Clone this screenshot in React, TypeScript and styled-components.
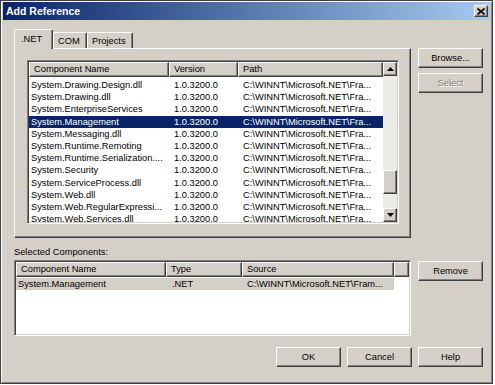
import React from "react";
import styled, { createGlobalStyle } from "styled-components";

const face = "#d4d0c8";
const shadow = "#808080";
const darkShadow = "#404040";
const highlight = "#ffffff";

const GlobalStyle = createGlobalStyle`
  html, body {
    margin: 0;
    padding: 0;
    background: #fff;
  }
  body {
    font-family: "Liberation Sans", Arial, sans-serif;
    font-size: 9.3px;
    color: #000;
  }
  * {
    box-sizing: border-box;
  }
`;

const raised = `
  border-top: 1px solid ${highlight};
  border-left: 1px solid ${highlight};
  border-right: 1px solid ${darkShadow};
  border-bottom: 1px solid ${darkShadow};
  box-shadow: inset -1px -1px 0 ${shadow};
`;

const sunken = `
  border-top: 1px solid ${shadow};
  border-left: 1px solid ${shadow};
  border-right: 1px solid ${highlight};
  border-bottom: 1px solid ${highlight};
  box-shadow: inset 1px 1px 0 ${darkShadow}, inset -1px -1px 0 ${face};
`;

const Window = styled.div`
  display: flex;
  flex-direction: column;
  width: 493px;
  height: 384px;
  padding: 1px 2px;
  border: 1px solid ${darkShadow};
  background: ${face};
  box-shadow: inset 1px 1px 0 ${highlight}, inset -1px -1px 0 ${shadow};
`;

const TitleBar = styled.div`
  display: flex;
  justify-content: space-between;
  align-items: center;
  height: 18px;
  padding: 0 2px 0 3px;
  background: linear-gradient(to right, #0a246a, #a6caf0);
`;

const TitleText = styled.span`
  color: #fff;
  font-size: 10.5px;
  font-weight: bold;
`;

const CloseButton = styled.div`
  display: flex;
  justify-content: center;
  align-items: center;
  width: 14px;
  height: 12px;
  background: ${face};
  ${raised}
`;

const Body = styled.div`
  display: flex;
  flex-direction: column;
  padding: 9px 7px 0 11px;
`;

const Row = styled.div<{ $top?: number }>`
  display: flex;
  align-items: flex-start;
  gap: 7px;
  margin-top: ${(p) => p.$top ?? 0}px;
`;

const TabArea = styled.div`
  display: flex;
  flex-direction: column;
  width: 397px;
`;

const TabStrip = styled.div`
  display: flex;
  align-items: flex-end;
  height: 19px;
`;

const Tab = styled.div<{ $active?: boolean; $width: number }>`
  position: relative;
  z-index: ${(p) => (p.$active ? 1 : 0)};
  width: ${(p) => p.$width}px;
  height: ${(p) => (p.$active ? 20 : 16)}px;
  margin-bottom: ${(p) => (p.$active ? -1 : 0)}px;
  padding: ${(p) => (p.$active ? "3px 0 0 6px" : "2px 0 0 4px")};
  border-top: 1px solid ${highlight};
  border-left: 1px solid ${highlight};
  border-right: 1px solid ${darkShadow};
  border-radius: 2px 2px 0 0;
  background: ${face};
  box-shadow: inset -1px 0 0 ${shadow};
  line-height: 12px;
  white-space: nowrap;
`;

const Panel = styled.div`
  width: 397px;
  height: 190px;
  padding: 11px 0 0 12px;
  border-top: 1px solid ${highlight};
  border-left: 1px solid ${highlight};
  border-right: 1px solid ${darkShadow};
  border-bottom: 1px solid ${darkShadow};
  box-shadow: inset -1px -1px 0 ${shadow};
`;

const ListView = styled.div<{ $width: number; $height: number }>`
  display: flex;
  width: ${(p) => p.$width}px;
  height: ${(p) => p.$height}px;
  padding: 1px;
  background: #fff;
  overflow: hidden;
  ${sunken}
`;

const ListMain = styled.div`
  display: flex;
  flex: 1;
  flex-direction: column;
  overflow: hidden;
`;

const Header = styled.div`
  display: flex;
  flex: none;
  height: 15px;
`;

const HeaderCell = styled.div<{ $width: number }>`
  flex: none;
  width: ${(p) => p.$width}px;
  height: 15px;
  padding-left: 4px;
  background: ${face};
  line-height: 13px;
  white-space: nowrap;
  overflow: hidden;
  ${raised}
`;

const Rows = styled.div<{ $top: number }>`
  display: flex;
  flex-direction: column;
  padding-top: ${(p) => p.$top}px;
`;

const ItemRow = styled.div<{ $selected?: boolean; $tone?: "focus" | "idle" }>`
  display: flex;
  flex: none;
  height: 12.2px;
  line-height: 12.2px;
  color: ${(p) => (p.$selected && p.$tone === "focus" ? "#fff" : "#000")};
  background: ${(p) =>
    p.$selected ? (p.$tone === "focus" ? "#0a246a" : face) : "transparent"};
`;

const Cell = styled.div<{ $width: number; $pad: number }>`
  flex: none;
  width: ${(p) => p.$width}px;
  padding-left: ${(p) => p.$pad}px;
  white-space: nowrap;
  overflow: hidden;
`;

const ScrollBar = styled.div`
  display: flex;
  flex: none;
  flex-direction: column;
  width: 14px;
`;

const ScrollButton = styled.div`
  display: flex;
  flex: none;
  justify-content: center;
  align-items: center;
  height: 14px;
  background: ${face};
  ${raised}
`;

const Track = styled.div`
  flex: 1;
  background: #ecebe6;
`;

const Thumb = styled.div<{ $offset: number }>`
  height: 24px;
  margin-top: ${(p) => p.$offset}px;
  background: ${face};
  ${raised}
`;

const ButtonColumn = styled.div<{ $top: number }>`
  display: flex;
  flex-direction: column;
  gap: 5px;
  margin-top: ${(p) => p.$top}px;
`;

const Button = styled.button`
  width: 65px;
  height: 20px;
  padding: 0;
  background: ${face};
  font: inherit;
  color: #000;
  ${raised}

  &:disabled {
    color: ${shadow};
    text-shadow: 1px 1px 0 ${highlight};
  }
`;

const Label = styled.div`
  margin-top: 8px;
  height: 13px;
  line-height: 13px;
`;

const Footer = styled.div`
  display: flex;
  justify-content: flex-end;
  gap: 6px;
  margin-top: 11px;
`;

const Arrow = ({ up }: { up?: boolean }) => (
  <svg width="7" height="4" viewBox="0 0 7 4">
    <path d={up ? "M3.5 0 L7 4 L0 4 Z" : "M0 0 L7 0 L3.5 4 Z"} fill="#000" />
  </svg>
);

const names = [
  "System.Drawing.Design.dll",
  "System.Drawing.dll",
  "System.EnterpriseServices",
  "System.Management",
  "System.Messaging.dll",
  "System.Runtime.Remoting",
  "System.Runtime.Serialization....",
  "System.Security",
  "System.ServiceProcess.dll",
  "System.Web.dll",
  "System.Web.RegularExpressi...",
  "System.Web.Services.dll",
];

const path = "C:\\WINNT\\Microsoft.NET\\Fra...";

export default function App() {
  return (
    <>
      <GlobalStyle />
      <Window>
        <TitleBar>
          <TitleText>Add Reference</TitleText>
          <CloseButton>
            <svg width="8" height="7" viewBox="0 0 8 7">
              <path d="M0.5 0.5 L7.5 6.5 M7.5 0.5 L0.5 6.5" stroke="#000" strokeWidth="1.6" />
            </svg>
          </CloseButton>
        </TitleBar>
        <Body>
          <Row>
            <TabArea>
              <TabStrip>
                <Tab $active $width={39}>.NET</Tab>
                <Tab $width={34}>COM</Tab>
                <Tab $width={46}>Projects</Tab>
              </TabStrip>
              <Panel>
                <ListView $width={372} $height={164}>
                  <ListMain>
                    <Header>
                      <HeaderCell $width={140}>Component Name</HeaderCell>
                      <HeaderCell $width={69}>Version</HeaderCell>
                      <HeaderCell $width={145}>Path</HeaderCell>
                    </Header>
                    <Rows $top={2}>
                      {names.map((n) => (
                        <ItemRow key={n} $selected={n === "System.Management"} $tone="focus">
                          <Cell $width={140} $pad={2}>{n}</Cell>
                          <Cell $width={69} $pad={5}>1.0.3200.0</Cell>
                          <Cell $width={145} $pad={5}>{path}</Cell>
                        </ItemRow>
                      ))}
                    </Rows>
                  </ListMain>
                  <ScrollBar>
                    <ScrollButton>
                      <Arrow up />
                    </ScrollButton>
                    <Track>
                      <Thumb $offset={94} />
                    </Track>
                    <ScrollButton>
                      <Arrow />
                    </ScrollButton>
                  </ScrollBar>
                </ListView>
              </Panel>
            </TabArea>
            <ButtonColumn $top={19}>
              <Button>Browse...</Button>
              <Button disabled>Select</Button>
            </ButtonColumn>
          </Row>
          <Label>Selected Components:</Label>
          <Row $top={1}>
            <ListView $width={397} $height={76}>
              <ListMain>
                <Header>
                  <HeaderCell $width={150}>Component Name</HeaderCell>
                  <HeaderCell $width={76}>Type</HeaderCell>
                  <HeaderCell $width={152}>Source</HeaderCell>
                  <HeaderCell $width={15} />
                </Header>
                <Rows $top={1}>
                  <ItemRow $selected $tone="idle" style={{ width: 378 }}>
                    <Cell $width={150} $pad={2}>System.Management</Cell>
                    <Cell $width={76} $pad={6}>.NET</Cell>
                    <Cell $width={152} $pad={5}>C:\WINNT\Microsoft.NET\Fram...</Cell>
                  </ItemRow>
                </Rows>
              </ListMain>
            </ListView>
            <ButtonColumn $top={1}>
              <Button>Remove</Button>
            </ButtonColumn>
          </Row>
          <Footer>
            <Button>OK</Button>
            <Button>Cancel</Button>
            <Button>Help</Button>
          </Footer>
        </Body>
      </Window>
    </>
  );
}
